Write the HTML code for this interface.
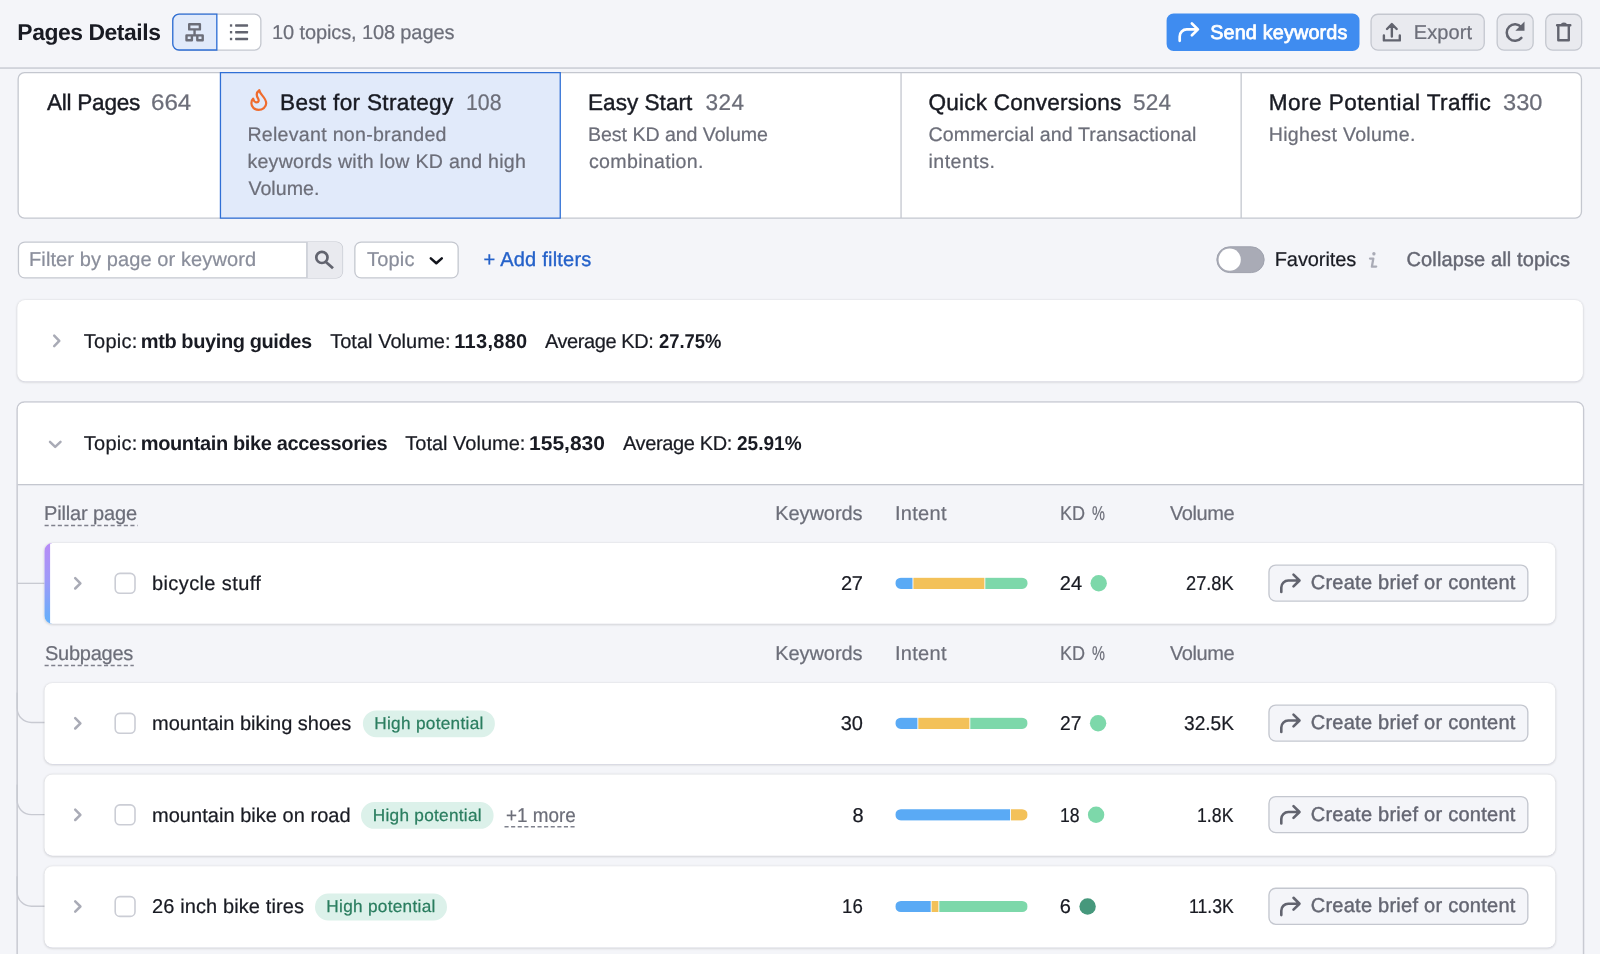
<!DOCTYPE html>
<html><head><meta charset="utf-8"><title>Pages Details</title>
<style>
html,body{margin:0;padding:0;}
body{width:1600px;height:954px;overflow:hidden;position:relative;background:#f4f5f9;font-family:"Liberation Sans",sans-serif;}
.t{position:absolute;white-space:pre;line-height:1;text-rendering:geometricPrecision;}
.a{position:absolute;box-sizing:border-box;}
svg{position:absolute;overflow:visible;}
#root{position:absolute;left:0;top:0;width:1600px;height:954px;overflow:hidden;will-change:transform;}

</style></head>
<body>
<div id="root">
<svg width="1600" height="954" viewBox="0 0 1600 954" style="left:0;top:0"><defs><filter id="sh" x="-2%" y="-20%" width="104%" height="140%"><feGaussianBlur stdDeviation="0.9"/></filter><linearGradient id="pg" x1="0" y1="0" x2="0" y2="1"><stop offset="0" stop-color="#b78bf6"/><stop offset="0.45" stop-color="#9f9af8"/><stop offset="1" stop-color="#62b0fb"/></linearGradient></defs>
<rect x="0.00" y="67.30" width="1600.00" height="1.50" fill="#c9ccd4"/>
<path d="M179.10 14.15H254.50A6.35 6.35 0 0 1 260.85 20.50V43.70A6.35 6.35 0 0 1 254.50 50.05H179.10A6.35 6.35 0 0 1 172.75 43.70V20.50A6.35 6.35 0 0 1 179.10 14.15Z" fill="#fff" stroke="#c4c7cf" stroke-width="1.3" />
<path d="M179.10 14.18H216.82V50.03H179.10A6.325 6.325 0 0 1 172.78 43.70V20.50A6.325 6.325 0 0 1 179.10 14.18Z" fill="#e1eafa" stroke="#2f6fd5" stroke-width="1.35" />
<path d="M1173.60 13.40H1352.50A7 7 0 0 1 1359.50 20.40V44.00A7 7 0 0 1 1352.50 51.00H1173.60A7 7 0 0 1 1166.60 44.00V20.40A7 7 0 0 1 1173.60 13.40Z" fill="#3f8cf0" />
<path d="M1377.90 14.25H1477.40A6.85 6.85 0 0 1 1484.25 21.10V43.30A6.85 6.85 0 0 1 1477.40 50.15H1377.90A6.85 6.85 0 0 1 1371.05 43.30V21.10A6.85 6.85 0 0 1 1377.90 14.25Z" fill="#e9eaef" stroke="#c4c7cf" stroke-width="1.3" />
<path d="M1504.00 14.25H1526.30A6.85 6.85 0 0 1 1533.15 21.10V43.30A6.85 6.85 0 0 1 1526.30 50.15H1504.00A6.85 6.85 0 0 1 1497.15 43.30V21.10A6.85 6.85 0 0 1 1504.00 14.25Z" fill="#e9eaef" stroke="#c4c7cf" stroke-width="1.3" />
<path d="M1552.60 14.25H1574.80A6.85 6.85 0 0 1 1581.65 21.10V43.30A6.85 6.85 0 0 1 1574.80 50.15H1552.60A6.85 6.85 0 0 1 1545.75 43.30V21.10A6.85 6.85 0 0 1 1552.60 14.25Z" fill="#e9eaef" stroke="#c4c7cf" stroke-width="1.3" />
<path d="M24.50 72.65H1575.10A6.35 6.35 0 0 1 1581.45 79.00V211.80A6.35 6.35 0 0 1 1575.10 218.15H24.50A6.35 6.35 0 0 1 18.15 211.80V79.00A6.35 6.35 0 0 1 24.50 72.65Z" fill="#fff" stroke="#c4c7cf" stroke-width="1.3" />
<path d="M220.45 72.65H560.25V218.15H220.45V72.65Z" fill="#e1eafa" stroke="#2f6fd5" stroke-width="1.3" />
<rect x="900.40" y="73.00" width="1.30" height="145.00" fill="#c4c7cf"/>
<rect x="1240.50" y="73.00" width="1.30" height="145.00" fill="#c4c7cf"/>
<path d="M24.80 242.05H336.10A6.35 6.35 0 0 1 342.45 248.40V271.60A6.35 6.35 0 0 1 336.10 277.95H24.80A6.35 6.35 0 0 1 18.45 271.60V248.40A6.35 6.35 0 0 1 24.80 242.05Z" fill="#fff" stroke="#c4c7cf" stroke-width="1.3" />
<path d="M306.30 242.05H336.15A6.3 6.3 0 0 1 342.45 248.35V271.65A6.3 6.3 0 0 1 336.15 277.95H306.30V242.05Z" fill="#e9eaef"/>
<rect x="306.30" y="242.00" width="1.30" height="36.00" fill="#c4c7cf"/>
<path d="M361.20 242.05H451.80A6.35 6.35 0 0 1 458.15 248.40V271.60A6.35 6.35 0 0 1 451.80 277.95H361.20A6.35 6.35 0 0 1 354.85 271.60V248.40A6.35 6.35 0 0 1 361.20 242.05Z" fill="#fff" stroke="#c4c7cf" stroke-width="1.3" />
<path d="M1229.70 246.80H1251.30A12.9 12.9 0 0 1 1264.20 259.70V259.70A12.9 12.9 0 0 1 1251.30 272.60H1229.70A12.9 12.9 0 0 1 1216.80 259.70V259.70A12.9 12.9 0 0 1 1229.70 246.80Z" fill="#a9abb6" stroke="#9fa2ae" stroke-width="1" />
<circle cx="1229.7" cy="259.7" r="11.1" fill="#fff"/>
<path d="M25.00 300.20H1575.20A8 8 0 0 1 1583.20 308.20V374.30A8 8 0 0 1 1575.20 382.30H25.00A8 8 0 0 1 17.00 374.30V308.20A8 8 0 0 1 25.00 300.20Z" fill="rgba(25,27,35,0.16)" filter="url(#sh)"/>
<path d="M25.30 300.00H1574.90A8 8 0 0 1 1582.90 308.00V373.30A8 8 0 0 1 1574.90 381.30H25.30A8 8 0 0 1 17.30 373.30V308.00A8 8 0 0 1 25.30 300.00Z" fill="#fff" />
<path d="M24.40 401.95H1576.30A7.25 7.25 0 0 1 1583.55 409.20V992.00A7.25 7.25 0 0 1 1576.30 999.25H24.40A7.25 7.25 0 0 1 17.15 992.00V409.20A7.25 7.25 0 0 1 24.40 401.95Z" fill="#f4f5f9" stroke="#c8cad2" stroke-width="1.5" />
<path d="M24.40 402.70H1576.30A6.5 6.5 0 0 1 1582.80 409.20V484.00H17.90V409.20A6.5 6.5 0 0 1 24.40 402.70Z" fill="#fff"/>
<rect x="17.90" y="484.00" width="1564.90" height="1.30" fill="#c4c7cf"/>
<rect x="17.00" y="582.70" width="28.00" height="1.30" fill="#c8cad2"/>
<path d="M17.15 692.5V708.2A14.3 14.3 0 0 0 31.45 722.5H45" fill="none" stroke="#c8cad2" stroke-width="1.4"/>
<path d="M17.15 784.6V800.3000000000001A14.3 14.3 0 0 0 31.45 814.6H45" fill="none" stroke="#c8cad2" stroke-width="1.4"/>
<path d="M17.15 876.2V891.9000000000001A14.3 14.3 0 0 0 31.45 906.2H45" fill="none" stroke="#c8cad2" stroke-width="1.4"/>
<path d="M52.20 543.20H1547.60A8 8 0 0 1 1555.60 551.20V616.80A8 8 0 0 1 1547.60 624.80H52.20A8 8 0 0 1 44.20 616.80V551.20A8 8 0 0 1 52.20 543.20Z" fill="rgba(25,27,35,0.16)" filter="url(#sh)"/>
<path d="M52.50 543.00H1547.30A8 8 0 0 1 1555.30 551.00V615.80A8 8 0 0 1 1547.30 623.80H52.50A8 8 0 0 1 44.50 615.80V551.00A8 8 0 0 1 52.50 543.00Z" fill="#fff" />
<path d="M52.50 543.00H50.10V623.80H52.50A8 8 0 0 1 44.50 615.80V551.00A8 8 0 0 1 52.50 543.00Z" fill="url(#pg)"/>
<path d="M119.90 573.40H130.30A4.7 4.7 0 0 1 135.00 578.10V588.50A4.7 4.7 0 0 1 130.30 593.20H119.90A4.7 4.7 0 0 1 115.20 588.50V578.10A4.7 4.7 0 0 1 119.90 573.40Z" fill="#fff" stroke="#cbcdd5" stroke-width="1.6" />
<clipPath id="c0"><path d="M900.90 577.70H1022.10A5.6 5.6 0 0 1 1027.70 583.30V583.30A5.6 5.6 0 0 1 1022.10 588.90H900.90A5.6 5.6 0 0 1 895.30 583.30V583.30A5.6 5.6 0 0 1 900.90 577.70Z"/></clipPath>
<g clip-path="url(#c0)"><rect x="895.3" y="577.3" width="17.2" height="12" fill="#5aaaf5"/><rect x="913.4" y="577.3" width="71.0" height="12" fill="#f3c159"/><rect x="985.3" y="577.3" width="42.5" height="12" fill="#7dd8aa"/></g>
<circle cx="1098.7" cy="583.3" r="8.2" fill="#7dd8aa"/>
<path d="M1275.80 565.07H1521.00A6.825 6.825 0 0 1 1527.83 571.90V594.30A6.825 6.825 0 0 1 1521.00 601.12H1275.80A6.825 6.825 0 0 1 1268.97 594.30V571.90A6.825 6.825 0 0 1 1275.80 565.07Z" fill="#f4f5f9" stroke="#c4c7cf" stroke-width="1.35" />
<path d="M52.20 683.20H1547.60A8 8 0 0 1 1555.60 691.20V756.90A8 8 0 0 1 1547.60 764.90H52.20A8 8 0 0 1 44.20 756.90V691.20A8 8 0 0 1 52.20 683.20Z" fill="rgba(25,27,35,0.16)" filter="url(#sh)"/>
<path d="M52.50 683.00H1547.30A8 8 0 0 1 1555.30 691.00V755.90A8 8 0 0 1 1547.30 763.90H52.50A8 8 0 0 1 44.50 755.90V691.00A8 8 0 0 1 52.50 683.00Z" fill="#fff" />
<path d="M119.90 713.40H130.30A4.7 4.7 0 0 1 135.00 718.10V728.50A4.7 4.7 0 0 1 130.30 733.20H119.90A4.7 4.7 0 0 1 115.20 728.50V718.10A4.7 4.7 0 0 1 119.90 713.40Z" fill="#fff" stroke="#cbcdd5" stroke-width="1.6" />
<clipPath id="c1"><path d="M900.90 717.70H1022.10A5.6 5.6 0 0 1 1027.70 723.30V723.30A5.6 5.6 0 0 1 1022.10 728.90H900.90A5.6 5.6 0 0 1 895.30 723.30V723.30A5.6 5.6 0 0 1 900.90 717.70Z"/></clipPath>
<g clip-path="url(#c1)"><rect x="895.3" y="717.3" width="22.1" height="12" fill="#5aaaf5"/><rect x="918.3" y="717.3" width="51.1" height="12" fill="#f3c159"/><rect x="970.3" y="717.3" width="57.3" height="12" fill="#7dd8aa"/></g>
<circle cx="1098.1" cy="723.3" r="8.2" fill="#7dd8aa"/>
<path d="M1275.80 705.07H1521.00A6.825 6.825 0 0 1 1527.83 711.90V734.30A6.825 6.825 0 0 1 1521.00 741.12H1275.80A6.825 6.825 0 0 1 1268.97 734.30V711.90A6.825 6.825 0 0 1 1275.80 705.07Z" fill="#f4f5f9" stroke="#c4c7cf" stroke-width="1.35" />
<path d="M52.20 774.60H1547.60A8 8 0 0 1 1555.60 782.60V848.70A8 8 0 0 1 1547.60 856.70H52.20A8 8 0 0 1 44.20 848.70V782.60A8 8 0 0 1 52.20 774.60Z" fill="rgba(25,27,35,0.16)" filter="url(#sh)"/>
<path d="M52.50 774.40H1547.30A8 8 0 0 1 1555.30 782.40V847.70A8 8 0 0 1 1547.30 855.70H52.50A8 8 0 0 1 44.50 847.70V782.40A8 8 0 0 1 52.50 774.40Z" fill="#fff" />
<path d="M119.90 804.90H130.30A4.7 4.7 0 0 1 135.00 809.60V820.00A4.7 4.7 0 0 1 130.30 824.70H119.90A4.7 4.7 0 0 1 115.20 820.00V809.60A4.7 4.7 0 0 1 119.90 804.90Z" fill="#fff" stroke="#cbcdd5" stroke-width="1.6" />
<clipPath id="c2"><path d="M900.90 809.20H1022.10A5.6 5.6 0 0 1 1027.70 814.80V814.80A5.6 5.6 0 0 1 1022.10 820.40H900.90A5.6 5.6 0 0 1 895.30 814.80V814.80A5.6 5.6 0 0 1 900.90 809.20Z"/></clipPath>
<g clip-path="url(#c2)"><rect x="895.3" y="808.8" width="114.8" height="12" fill="#5aaaf5"/><rect x="1011.0" y="808.8" width="16.6" height="12" fill="#f3c159"/></g>
<circle cx="1096.1" cy="814.8" r="8.2" fill="#7dd8aa"/>
<path d="M1275.80 796.57H1521.00A6.825 6.825 0 0 1 1527.83 803.40V825.80A6.825 6.825 0 0 1 1521.00 832.62H1275.80A6.825 6.825 0 0 1 1268.97 825.80V803.40A6.825 6.825 0 0 1 1275.80 796.57Z" fill="#f4f5f9" stroke="#c4c7cf" stroke-width="1.35" />
<path d="M52.20 866.40H1547.60A8 8 0 0 1 1555.60 874.40V940.60A8 8 0 0 1 1547.60 948.60H52.20A8 8 0 0 1 44.20 940.60V874.40A8 8 0 0 1 52.20 866.40Z" fill="rgba(25,27,35,0.16)" filter="url(#sh)"/>
<path d="M52.50 866.20H1547.30A8 8 0 0 1 1555.30 874.20V939.60A8 8 0 0 1 1547.30 947.60H52.50A8 8 0 0 1 44.50 939.60V874.20A8 8 0 0 1 52.50 866.20Z" fill="#fff" />
<path d="M119.90 896.60H130.30A4.7 4.7 0 0 1 135.00 901.30V911.70A4.7 4.7 0 0 1 130.30 916.40H119.90A4.7 4.7 0 0 1 115.20 911.70V901.30A4.7 4.7 0 0 1 119.90 896.60Z" fill="#fff" stroke="#cbcdd5" stroke-width="1.6" />
<clipPath id="c3"><path d="M900.90 900.90H1022.10A5.6 5.6 0 0 1 1027.70 906.50V906.50A5.6 5.6 0 0 1 1022.10 912.10H900.90A5.6 5.6 0 0 1 895.30 906.50V906.50A5.6 5.6 0 0 1 900.90 900.90Z"/></clipPath>
<g clip-path="url(#c3)"><rect x="895.3" y="900.5" width="35.4" height="12" fill="#5aaaf5"/><rect x="931.6" y="900.5" width="6.8" height="12" fill="#f3c159"/><rect x="939.3" y="900.5" width="88.3" height="12" fill="#7dd8aa"/></g>
<circle cx="1087.6" cy="906.5" r="8.2" fill="#46987c"/>
<path d="M1275.80 888.27H1521.00A6.825 6.825 0 0 1 1527.83 895.10V917.50A6.825 6.825 0 0 1 1521.00 924.33H1275.80A6.825 6.825 0 0 1 1268.97 917.50V895.10A6.825 6.825 0 0 1 1275.80 888.27Z" fill="#f4f5f9" stroke="#c4c7cf" stroke-width="1.35" />
<path d="M376.30 710.40H481.50A13.4 13.4 0 0 1 494.90 723.80V723.80A13.4 13.4 0 0 1 481.50 737.20H376.30A13.4 13.4 0 0 1 362.90 723.80V723.80A13.4 13.4 0 0 1 376.30 710.40Z" fill="#dcf1ea" />
<path d="M374.40 802.00H480.20A13.4 13.4 0 0 1 493.60 815.40V815.40A13.4 13.4 0 0 1 480.20 828.80H374.40A13.4 13.4 0 0 1 361.00 815.40V815.40A13.4 13.4 0 0 1 374.40 802.00Z" fill="#dcf1ea" />
<path d="M328.40 893.60H433.60A13.4 13.4 0 0 1 447.00 907.00V907.00A13.4 13.4 0 0 1 433.60 920.40H328.40A13.4 13.4 0 0 1 315.00 907.00V907.00A13.4 13.4 0 0 1 328.40 893.60Z" fill="#dcf1ea" />
<path d="M44.6 525.5H137.5" stroke="#7f818d" stroke-width="1.4" stroke-dasharray="4.1 2.5" fill="none"/>
<path d="M44.6 665.5H133.8" stroke="#7f818d" stroke-width="1.4" stroke-dasharray="4.1 2.5" fill="none"/>
<path d="M504.5 826.8H576.2" stroke="#7f818d" stroke-width="1.4" stroke-dasharray="4.1 2.5" fill="none"/>
<path d="M189.2 24.3h10.7v5.1h-10.7z M194.55 29.4v6 M186.5 35.4h5.4v4.9h-5.4z M197.3 35.4h5.4v4.9h-5.4z M191.9 35.4h5.4" fill="none" stroke="#6c6e79" stroke-width="2.4" stroke-linecap="round" stroke-linejoin="round" />
<rect x="229.9" y="24.3" width="2.3" height="2.4" fill="#62646f"/>
<rect x="235.1" y="24.3" width="13" height="2.4" rx="0.6" fill="#62646f"/>
<rect x="229.9" y="31.000000000000004" width="2.3" height="2.4" fill="#62646f"/>
<rect x="235.1" y="31.000000000000004" width="13" height="2.4" rx="0.6" fill="#62646f"/>
<rect x="229.9" y="37.8" width="2.3" height="2.4" fill="#62646f"/>
<rect x="235.1" y="37.8" width="13" height="2.4" rx="0.6" fill="#62646f"/>
<path d="M1179.7 40.800000000000004V36.400000000000006a7 7 0 0 1 7 -7H1197.3 M1191.9 23.500000000000004L1197.9 29.400000000000002L1191.9 35.300000000000004" fill="none" stroke="#fff" stroke-width="2.7" stroke-linecap="round" stroke-linejoin="round" />
<path d="M1383.9 35.4V40.4H1399.8V35.4 M1391.85 36.6V24.2 M1387 29L1391.85 24.1L1396.7 29" fill="none" stroke="#62646f" stroke-width="2.4" stroke-linecap="round" stroke-linejoin="round" />
<path d="M1521.3 27.1A8.3 8.3 0 1 0 1521.4 37.9" fill="none" stroke="#62646f" stroke-width="2.5" stroke-linecap="round" stroke-linejoin="round" />
<path d="M1523.4 24.2V29.6H1518z" fill="#62646f" stroke="#62646f" stroke-width="2.2" stroke-linejoin="miter"/>
<path d="M1557.1 25.2H1570.3 M1558.3 25.4V40.3H1568.8V25.4" fill="none" stroke="#62646f" stroke-width="2.4" stroke-linecap="round" stroke-linejoin="round" />
<path d="M1561 24.6a2.9 2 0 0 1 5.8 0z" fill="#62646f"/>
<path d="M259.3 90.2C259.6 94.5 266.2 97.5 266.2 103.2C266.2 107.3 262.4 109.8 258.6 109.8C254.4 109.8 251.4 106.8 251.4 103.2C251.4 101 252 99.6 253.2 98.6C253.6 100.6 254.9 102.3 256.8 102.3C258.7 102.3 259.2 100.4 258 98.4C256.2 95.4 256.4 92.3 259.3 90.2Z" fill="none" stroke="#ef6c2e" stroke-width="2.2" stroke-linecap="round" stroke-linejoin="round" />
<circle cx="321.9" cy="257.4" r="5.6" fill="none" stroke="#62646f" stroke-width="2.7"/>
<path d="M325.9 262L333 268.3" stroke="#62646f" stroke-width="2.8" fill="none"/>
<path d="M430.8 258.4L436.3 263.3L441.8 258.4" fill="none" stroke="#12141c" stroke-width="2.5" stroke-linecap="round" stroke-linejoin="round" />
<circle cx="1373.9" cy="253.8" r="1.7" fill="#a9abb6"/>
<path d="M1370 258.6H1373.3L1371.9 266.6H1376.2" fill="none" stroke="#a9abb6" stroke-width="2.3" stroke-linecap="round" stroke-linejoin="round" />
<path d="M54.2 335.7L59.3 340.9L54.2 346.1" fill="none" stroke="#a9abb6" stroke-width="2.5" stroke-linecap="round" stroke-linejoin="round" />
<path d="M50 441.9L55.2 446.9L60.5 441.9" fill="none" stroke="#a9abb6" stroke-width="2.5" stroke-linecap="round" stroke-linejoin="round" />
<path d="M75.2 578.0999999999999L80.4 583.3L75.2 588.5" fill="none" stroke="#a9abb6" stroke-width="2.5" stroke-linecap="round" stroke-linejoin="round" />
<path d="M1281.3 591.9V587.5a7 7 0 0 1 7 -7H1298.8999999999999 M1293.5 574.5999999999999L1299.5 580.5L1293.5 586.4" fill="none" stroke="#62646f" stroke-width="2.6" stroke-linecap="round" stroke-linejoin="round" />
<path d="M75.2 718.0999999999999L80.4 723.3L75.2 728.5" fill="none" stroke="#a9abb6" stroke-width="2.5" stroke-linecap="round" stroke-linejoin="round" />
<path d="M1281.3 731.9V727.5a7 7 0 0 1 7 -7H1298.8999999999999 M1293.5 714.5999999999999L1299.5 720.5L1293.5 726.4" fill="none" stroke="#62646f" stroke-width="2.6" stroke-linecap="round" stroke-linejoin="round" />
<path d="M75.2 809.5999999999999L80.4 814.8L75.2 820.0" fill="none" stroke="#a9abb6" stroke-width="2.5" stroke-linecap="round" stroke-linejoin="round" />
<path d="M1281.3 823.4V819.0a7 7 0 0 1 7 -7H1298.8999999999999 M1293.5 806.0999999999999L1299.5 812.0L1293.5 817.9" fill="none" stroke="#62646f" stroke-width="2.6" stroke-linecap="round" stroke-linejoin="round" />
<path d="M75.2 901.3L80.4 906.5L75.2 911.7" fill="none" stroke="#a9abb6" stroke-width="2.5" stroke-linecap="round" stroke-linejoin="round" />
<path d="M1281.3 915.1V910.7a7 7 0 0 1 7 -7H1298.8999999999999 M1293.5 897.8L1299.5 903.7L1293.5 909.6" fill="none" stroke="#62646f" stroke-width="2.6" stroke-linecap="round" stroke-linejoin="round" /></svg>
<span class="t" style="left:17.30px;top:19px;line-height:26px;font-size:22.9px;letter-spacing:-0.436px;color:#191b23;font-weight:700;">Pages Details</span>
<span class="t" style="left:272.00px;top:22px;line-height:22px;font-size:20px;letter-spacing:-0.115px;color:#6c6e79;-webkit-text-stroke:0.22px #6c6e79;">10 topics, 108 pages</span>
<span class="t" style="left:1210.20px;top:22px;line-height:22px;font-size:19.8px;letter-spacing:0.162px;color:#ffffff;-webkit-text-stroke:0.75px #fff;">Send keywords</span>
<span class="t" style="left:1413.75px;top:22px;line-height:22px;font-size:20px;letter-spacing:0.101px;color:#6c6e79;-webkit-text-stroke:0.22px #6c6e79;">Export</span>
<span class="t" style="left:47.00px;top:90px;line-height:25px;font-size:22.6px;letter-spacing:-0.269px;color:#191b23;-webkit-text-stroke:0.4px #191b23;">All Pages</span>
<span class="t" style="left:151.33px;top:90px;line-height:25px;font-size:22.6px;letter-spacing:0.000px;color:#6c6e79;-webkit-text-stroke:0.22px #6c6e79;transform:scaleX(1.068);transform-origin:0 0;">664</span>
<span class="t" style="left:280.00px;top:90px;line-height:25px;font-size:22.6px;letter-spacing:0.314px;color:#191b23;-webkit-text-stroke:0.4px #191b23;">Best for Strategy</span>
<span class="t" style="left:466.06px;top:90px;line-height:25px;font-size:22.6px;letter-spacing:0.000px;color:#6c6e79;-webkit-text-stroke:0.22px #6c6e79;transform:scaleX(0.941);transform-origin:0 0;">108</span>
<span class="t" style="left:588.00px;top:90px;line-height:25px;font-size:22.6px;letter-spacing:0.006px;color:#191b23;-webkit-text-stroke:0.4px #191b23;">Easy Start</span>
<span class="t" style="left:705.60px;top:90px;line-height:25px;font-size:22.6px;letter-spacing:0.434px;color:#6c6e79;-webkit-text-stroke:0.22px #6c6e79;">324</span>
<span class="t" style="left:928.40px;top:90px;line-height:25px;font-size:22.6px;letter-spacing:0.206px;color:#191b23;-webkit-text-stroke:0.4px #191b23;">Quick Conversions</span>
<span class="t" style="left:1133.00px;top:90px;line-height:25px;font-size:22.6px;letter-spacing:0.134px;color:#6c6e79;-webkit-text-stroke:0.22px #6c6e79;">524</span>
<span class="t" style="left:1268.80px;top:90px;line-height:25px;font-size:22.6px;letter-spacing:0.425px;color:#191b23;-webkit-text-stroke:0.4px #191b23;">More Potential Traffic</span>
<span class="t" style="left:1502.90px;top:90px;line-height:25px;font-size:22.6px;letter-spacing:0.000px;color:#6c6e79;-webkit-text-stroke:0.22px #6c6e79;transform:scaleX(1.045);transform-origin:0 0;">330</span>
<span class="t" style="left:247.40px;top:124px;line-height:22px;font-size:19.6px;letter-spacing:0.274px;color:#6c6e79;-webkit-text-stroke:0.22px #6c6e79;">Relevant non-branded</span>
<span class="t" style="left:247.40px;top:151px;line-height:22px;font-size:19.6px;letter-spacing:0.262px;color:#6c6e79;-webkit-text-stroke:0.22px #6c6e79;">keywords with low KD and high</span>
<span class="t" style="left:248.40px;top:178px;line-height:22px;font-size:19.6px;letter-spacing:0.041px;color:#6c6e79;-webkit-text-stroke:0.22px #6c6e79;">Volume.</span>
<span class="t" style="left:588.00px;top:124px;line-height:22px;font-size:19.6px;letter-spacing:-0.053px;color:#6c6e79;-webkit-text-stroke:0.22px #6c6e79;">Best KD and Volume</span>
<span class="t" style="left:589.00px;top:151px;line-height:22px;font-size:19.6px;letter-spacing:0.304px;color:#6c6e79;-webkit-text-stroke:0.22px #6c6e79;">combination.</span>
<span class="t" style="left:928.40px;top:124px;line-height:22px;font-size:19.6px;letter-spacing:0.125px;color:#6c6e79;-webkit-text-stroke:0.22px #6c6e79;">Commercial and Transactional</span>
<span class="t" style="left:928.40px;top:151px;line-height:22px;font-size:19.6px;letter-spacing:0.496px;color:#6c6e79;-webkit-text-stroke:0.22px #6c6e79;">intents.</span>
<span class="t" style="left:1268.80px;top:124px;line-height:22px;font-size:19.6px;letter-spacing:0.276px;color:#6c6e79;-webkit-text-stroke:0.22px #6c6e79;">Highest Volume.</span>
<span class="t" style="left:29.00px;top:249px;line-height:22px;font-size:20px;letter-spacing:0.108px;color:#8a8e9b;-webkit-text-stroke:0.22px #8a8e9b;">Filter by page or keyword</span>
<span class="t" style="left:367.00px;top:249px;line-height:22px;font-size:20px;letter-spacing:0.178px;color:#8a8e9b;-webkit-text-stroke:0.22px #8a8e9b;">Topic</span>
<span class="t" style="left:483.60px;top:249px;line-height:22px;font-size:20px;letter-spacing:0.220px;color:#2461c9;-webkit-text-stroke:0.35px #2461c9;">+ Add filters</span>
<span class="t" style="left:1274.75px;top:249px;line-height:22px;font-size:20px;letter-spacing:-0.093px;color:#191b23;-webkit-text-stroke:0.22px #191b23;">Favorites</span>
<span class="t" style="left:1406.50px;top:249px;line-height:22px;font-size:20px;letter-spacing:0.128px;color:#646672;-webkit-text-stroke:0.42px #646672;">Collapse all topics</span>
<span class="t" style="left:83.75px;top:331px;line-height:22px;font-size:20px;letter-spacing:0.262px;color:#191b23;-webkit-text-stroke:0.22px #191b23;">Topic:</span>
<span class="t" style="left:140.75px;top:331px;line-height:22px;font-size:20px;letter-spacing:-0.400px;color:#191b23;font-weight:700;">mtb buying guides</span>
<span class="t" style="left:330.20px;top:331px;line-height:22px;font-size:20px;letter-spacing:0.024px;color:#191b23;-webkit-text-stroke:0.22px #191b23;">Total Volume:</span>
<span class="t" style="left:454.30px;top:331px;line-height:22px;font-size:20px;letter-spacing:0.289px;color:#191b23;font-weight:700;">113,880</span>
<span class="t" style="left:545.00px;top:331px;line-height:22px;font-size:20px;letter-spacing:-0.427px;color:#191b23;-webkit-text-stroke:0.22px #191b23;">Average KD:</span>
<span class="t" style="left:659.40px;top:331px;line-height:22px;font-size:20px;letter-spacing:0.000px;color:#191b23;font-weight:700;transform:scaleX(0.920);transform-origin:0 0;">27.75%</span>
<span class="t" style="left:83.75px;top:433px;line-height:22px;font-size:20px;letter-spacing:0.262px;color:#191b23;-webkit-text-stroke:0.22px #191b23;">Topic:</span>
<span class="t" style="left:140.75px;top:433px;line-height:22px;font-size:20px;letter-spacing:-0.366px;color:#191b23;font-weight:700;">mountain bike accessories</span>
<span class="t" style="left:405.30px;top:433px;line-height:22px;font-size:20px;letter-spacing:-0.001px;color:#191b23;-webkit-text-stroke:0.22px #191b23;">Total Volume:</span>
<span class="t" style="left:528.95px;top:433px;line-height:22px;font-size:20px;letter-spacing:0.000px;color:#191b23;font-weight:700;transform:scaleX(1.051);transform-origin:0 0;">155,830</span>
<span class="t" style="left:623.00px;top:433px;line-height:22px;font-size:20px;letter-spacing:-0.367px;color:#191b23;-webkit-text-stroke:0.22px #191b23;">Average KD:</span>
<span class="t" style="left:737.00px;top:433px;line-height:22px;font-size:20px;letter-spacing:0.000px;color:#191b23;font-weight:700;transform:scaleX(0.952);transform-origin:0 0;">25.91%</span>
<span class="t" style="left:44.00px;top:503px;line-height:22px;font-size:20px;letter-spacing:-0.138px;color:#6c6e79;-webkit-text-stroke:0.22px #6c6e79;">Pillar page</span>
<span class="t" style="left:775.25px;top:503px;line-height:22px;font-size:20px;letter-spacing:-0.080px;color:#6c6e79;-webkit-text-stroke:0.22px #6c6e79;">Keywords</span>
<span class="t" style="left:895.00px;top:503px;line-height:22px;font-size:20px;letter-spacing:0.284px;color:#6c6e79;-webkit-text-stroke:0.22px #6c6e79;">Intent</span>
<span class="t" style="left:1060.30px;top:503px;line-height:22px;font-size:20px;letter-spacing:0.000px;color:#6c6e79;-webkit-text-stroke:0.22px #6c6e79;transform:scaleX(0.904);transform-origin:0 0;">KD</span>
<span class="t" style="left:1092.20px;top:503px;line-height:22px;font-size:20px;letter-spacing:0.000px;color:#6c6e79;-webkit-text-stroke:0.22px #6c6e79;transform:scaleX(0.728);transform-origin:0 0;">%</span>
<span class="t" style="left:1170.00px;top:503px;line-height:22px;font-size:20px;letter-spacing:-0.437px;color:#6c6e79;-webkit-text-stroke:0.22px #6c6e79;">Volume</span>
<span class="t" style="left:45.00px;top:643px;line-height:22px;font-size:20px;letter-spacing:-0.261px;color:#6c6e79;-webkit-text-stroke:0.22px #6c6e79;">Subpages</span>
<span class="t" style="left:775.25px;top:643px;line-height:22px;font-size:20px;letter-spacing:-0.080px;color:#6c6e79;-webkit-text-stroke:0.22px #6c6e79;">Keywords</span>
<span class="t" style="left:895.00px;top:643px;line-height:22px;font-size:20px;letter-spacing:0.284px;color:#6c6e79;-webkit-text-stroke:0.22px #6c6e79;">Intent</span>
<span class="t" style="left:1060.30px;top:643px;line-height:22px;font-size:20px;letter-spacing:0.000px;color:#6c6e79;-webkit-text-stroke:0.22px #6c6e79;transform:scaleX(0.904);transform-origin:0 0;">KD</span>
<span class="t" style="left:1092.20px;top:643px;line-height:22px;font-size:20px;letter-spacing:0.000px;color:#6c6e79;-webkit-text-stroke:0.22px #6c6e79;transform:scaleX(0.728);transform-origin:0 0;">%</span>
<span class="t" style="left:1170.00px;top:643px;line-height:22px;font-size:20px;letter-spacing:-0.437px;color:#6c6e79;-webkit-text-stroke:0.22px #6c6e79;">Volume</span>
<span class="t" style="left:152.00px;top:573px;line-height:22px;font-size:20px;letter-spacing:0.390px;color:#191b23;-webkit-text-stroke:0.22px #191b23;">bicycle stuff</span>
<span class="t" style="left:840.90px;top:573px;line-height:22px;font-size:20px;letter-spacing:-0.323px;color:#191b23;-webkit-text-stroke:0.22px #191b23;">27</span>
<span class="t" style="left:1059.70px;top:573px;line-height:22px;font-size:20px;letter-spacing:0.077px;color:#191b23;-webkit-text-stroke:0.22px #191b23;">24</span>
<span class="t" style="left:1186.29px;top:573px;line-height:22px;font-size:20px;letter-spacing:0.000px;color:#191b23;-webkit-text-stroke:0.22px #191b23;transform:scaleX(0.911);transform-origin:0 0;">27.8K</span>
<span class="t" style="left:1310.70px;top:572px;line-height:22px;font-size:20px;letter-spacing:0.257px;color:#646672;-webkit-text-stroke:0.42px #646672;">Create brief or content</span>
<span class="t" style="left:152.00px;top:713px;line-height:22px;font-size:20px;letter-spacing:0.012px;color:#191b23;-webkit-text-stroke:0.22px #191b23;">mountain biking shoes</span>
<span class="t" style="left:840.75px;top:713px;line-height:22px;font-size:20px;letter-spacing:-0.173px;color:#191b23;-webkit-text-stroke:0.22px #191b23;">30</span>
<span class="t" style="left:1059.74px;top:713px;line-height:22px;font-size:20px;letter-spacing:0.000px;color:#191b23;-webkit-text-stroke:0.22px #191b23;transform:scaleX(0.961);transform-origin:0 0;">27</span>
<span class="t" style="left:1183.90px;top:713px;line-height:22px;font-size:20px;letter-spacing:0.000px;color:#191b23;-webkit-text-stroke:0.22px #191b23;transform:scaleX(0.956);transform-origin:0 0;">32.5K</span>
<span class="t" style="left:1310.70px;top:712px;line-height:22px;font-size:20px;letter-spacing:0.257px;color:#646672;-webkit-text-stroke:0.42px #646672;">Create brief or content</span>
<span class="t" style="left:152.00px;top:805px;line-height:22px;font-size:20px;letter-spacing:0.036px;color:#191b23;-webkit-text-stroke:0.22px #191b23;">mountain bike on road</span>
<span class="t" style="left:852.40px;top:805px;line-height:22px;font-size:20px;letter-spacing:0.000px;color:#191b23;-webkit-text-stroke:0.22px #191b23;">8</span>
<span class="t" style="left:1059.82px;top:805px;line-height:22px;font-size:20px;letter-spacing:0.000px;color:#191b23;-webkit-text-stroke:0.22px #191b23;transform:scaleX(0.881);transform-origin:0 0;">18</span>
<span class="t" style="left:1197.41px;top:805px;line-height:22px;font-size:20px;letter-spacing:0.000px;color:#191b23;-webkit-text-stroke:0.22px #191b23;transform:scaleX(0.887);transform-origin:0 0;">1.8K</span>
<span class="t" style="left:1310.70px;top:804px;line-height:22px;font-size:20px;letter-spacing:0.257px;color:#646672;-webkit-text-stroke:0.42px #646672;">Create brief or content</span>
<span class="t" style="left:152.00px;top:896px;line-height:22px;font-size:20px;letter-spacing:0.113px;color:#191b23;-webkit-text-stroke:0.22px #191b23;">26 inch bike tires</span>
<span class="t" style="left:842.07px;top:896px;line-height:22px;font-size:20px;letter-spacing:0.000px;color:#191b23;-webkit-text-stroke:0.22px #191b23;transform:scaleX(0.933);transform-origin:0 0;">16</span>
<span class="t" style="left:1059.70px;top:896px;line-height:22px;font-size:20px;letter-spacing:0.000px;color:#191b23;-webkit-text-stroke:0.22px #191b23;">6</span>
<span class="t" style="left:1189.12px;top:896px;line-height:22px;font-size:20px;letter-spacing:0.000px;color:#191b23;-webkit-text-stroke:0.22px #191b23;transform:scaleX(0.882);transform-origin:0 0;">11.3K</span>
<span class="t" style="left:1310.70px;top:895px;line-height:22px;font-size:20px;letter-spacing:0.257px;color:#646672;-webkit-text-stroke:0.42px #646672;">Create brief or content</span>
<span class="t" style="left:374.25px;top:713px;line-height:20px;font-size:17.2px;letter-spacing:0.305px;color:#2a7d5f;-webkit-text-stroke:0.25px #2a7d5f;">High potential</span>
<span class="t" style="left:372.75px;top:805px;line-height:20px;font-size:17.2px;letter-spacing:0.289px;color:#2a7d5f;-webkit-text-stroke:0.25px #2a7d5f;">High potential</span>
<span class="t" style="left:326.30px;top:896px;line-height:20px;font-size:17.2px;letter-spacing:0.301px;color:#2a7d5f;-webkit-text-stroke:0.25px #2a7d5f;">High potential</span>
<span class="t" style="left:505.80px;top:805px;line-height:22px;font-size:20px;letter-spacing:0.000px;color:#6c6e79;-webkit-text-stroke:0.22px #6c6e79;transform:scaleX(0.942);transform-origin:0 0;">+1 more</span>
</div>
</body></html>
